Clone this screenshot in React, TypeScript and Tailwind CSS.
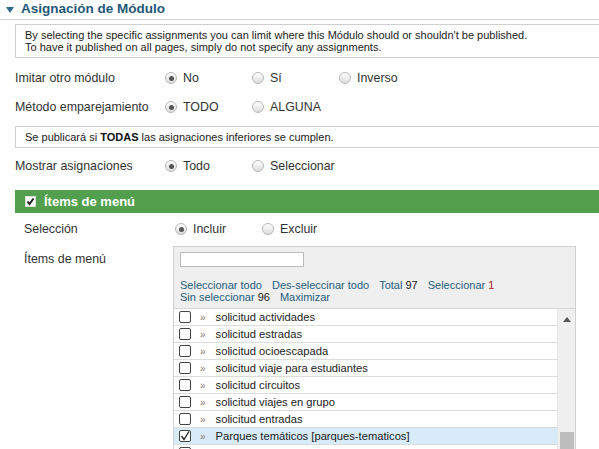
import React from 'react';

function Radio({ label, checked }: { label: string; checked?: boolean }) {
    return (
        <label className="flex items-center gap-[6px]">
            <span className="w-[12px] h-[12px] rounded-full border border-[#b9b9b9] bg-gradient-to-b from-[#ffffff] to-[#dcdcdc] flex items-center justify-center">
                {checked && <span className="w-[5px] h-[5px] rounded-full bg-[#555]" />}
            </span>
            <span>{label}</span>
        </label>
    );
}

function RadioRow({ label, options }: { label: string; options: { label: string; checked?: boolean }[] }) {
    return (
        <div className="flex items-center h-[29px] text-[12.4px] text-[#333]">
            <div className="w-[150px]">{label}</div>
            <div className="flex">
                {options.map((o) => (
                    <div key={o.label} className="w-[87px]">
                        <Radio label={o.label} checked={o.checked} />
                    </div>
                ))}
            </div>
        </div>
    );
}

const items = [
    'solicitud actividades',
    'solicitud estradas',
    'solicitud ocioescapada',
    'solicitud viaje para estudiantes',
    'solicitud circuitos',
    'solicitud viajes en grupo',
    'solicitud entradas',
];

function Row({ text, checked }: { text: string; checked?: boolean }) {
    return (
        <div className={`h-[17px] flex items-center border-b border-[#dcdcdc] text-[11.2px] text-[#222] ${checked ? 'bg-[#d7ebf9]' : ''}`}>
            <span className="ml-[5px] w-[12px] h-[12px] border border-[#444] rounded-[2px] bg-white flex items-center justify-center">
                {checked && (
                    <svg width="10" height="10" viewBox="0 0 10 10">
                        <path d="M1.5 5 L4 8.5 L9 0.5" stroke="#222" strokeWidth="1.3" fill="none" />
                    </svg>
                )}
            </span>
            <span className="ml-[9px] text-[#8a7a6a] text-[10px]">»</span>
            <span className="ml-[10px]">{text}</span>
        </div>
    );
}

export default function App() {
    return (
        <div className="w-[599px] h-[449px] overflow-hidden bg-white font-['Liberation_Sans',Arial,sans-serif]">
            {/* header */}
            <div className="flex items-center h-[20px] pl-[6px] border-b border-[#d4d4d4]">
                <span className="w-0 h-0 border-l-[4px] border-r-[4px] border-t-[6px] border-l-transparent border-r-transparent border-t-[#2d6b8f] mr-[7px]" />
                <span className="text-[13.5px] font-bold text-[#1f5878]">Asignación de Módulo</span>
            </div>

            <div className="pl-[15px]">
                <div className="mt-[4px] border border-r-0 border-[#cfcfcf] px-[9px] py-[4px] text-[11px] leading-[12px] text-[#222]">
                    By selecting the specific assignments you can limit where this Módulo should or shouldn't be published.
                    <br />
                    To have it published on all pages, simply do not specify any assignments.
                </div>

                <div className="mt-[6px]">
                    <RadioRow label="Imitar otro módulo" options={[{ label: 'No', checked: true }, { label: 'Sí' }, { label: 'Inverso' }]} />
                    <RadioRow label="Método emparejamiento" options={[{ label: 'TODO', checked: true }, { label: 'ALGUNA' }]} />
                </div>

                <div className="mt-[4px] border border-r-0 border-[#cfcfcf] px-[9px] h-[22px] flex items-center text-[11px] text-[#222]">
                    <span>
                        Se publicará si <b className="font-bold text-[#111]">TODAS</b> las asignaciones inferiores se cumplen.
                    </span>
                </div>

                <div className="mt-[4px]">
                    <RadioRow label="Mostrar asignaciones" options={[{ label: 'Todo', checked: true }, { label: 'Seleccionar' }]} />
                </div>

                {/* green section */}
                <div className="mt-[9px] h-[23px] bg-[#52a04e] flex items-center pl-[10px] gap-[8px]">
                    <span className="w-[11px] h-[11px] bg-white border border-[#ddd] flex items-center justify-center">
                        <svg width="9" height="9" viewBox="0 0 9 9">
                            <path d="M1.5 4.5 L3.5 7 L7.5 1.5" stroke="#222" strokeWidth="2" fill="none" />
                        </svg>
                    </span>
                    <span className="text-white font-bold text-[13px]">Ítems de menú</span>
                </div>

                <div className="pl-[9px]">
                    <div className="flex items-center h-[33px] text-[12.4px] text-[#333]">
                        <div className="w-[151px]">Selección</div>
                        <div className="w-[87px]">
                            <Radio label="Incluir" checked />
                        </div>
                        <Radio label="Excluir" />
                    </div>

                    <div className="flex text-[12.4px] text-[#333]">
                        <div className="w-[149px] pt-[4px]">Ítems de menú</div>
                        <div className="w-[403px] bg-[#efefef] border border-[#d0d0d0] border-b-0">
                            <div className="px-[6px] pt-[5px]">
                                <div className="w-[124px] h-[15px] bg-white border border-[#bcbcbc]" />
                                <div className="mt-[12px] text-[11px] leading-[12px] text-[#245d80]">
                                    <div className="flex gap-[10px]">
                                        <span>Seleccionar todo</span>
                                        <span>Des-seleccinar todo</span>
                                        <span>
                                            Total <span className="text-[#222]">97</span>
                                        </span>
                                        <span>
                                            Seleccionar <span className="text-[#b22222]">1</span>
                                        </span>
                                    </div>
                                    <div className="flex gap-[10px]">
                                        <span>
                                            Sin seleccionar <span className="text-[#222]">96</span>
                                        </span>
                                        <span>Maximizar</span>
                                    </div>
                                </div>
                            </div>
                            <div className="mt-[5px] flex border-t border-[#d8d8d8]">
                                <div className="flex-1 bg-white">
                                    {items.map((t) => (
                                        <Row key={t} text={t} />
                                    ))}
                                    <Row text="Parques temáticos [parques-tematicos]" checked />
                                    <Row text="oferta especial" />
                                </div>
                                <div className="w-[18px] bg-[#f0f0f0] border-l border-[#e4e4e4] flex flex-col items-center">
                                    <span className="mt-[8px] w-0 h-0 border-l-[4px] border-r-[4px] border-b-[5px] border-l-transparent border-r-transparent border-b-[#555]" />
                                    <div className="mt-[110px] w-[14px] h-[30px] bg-[#bdbdbd]" />
                                </div>
                            </div>
                        </div>
                    </div>
                </div>
            </div>
        </div>
    );
}
